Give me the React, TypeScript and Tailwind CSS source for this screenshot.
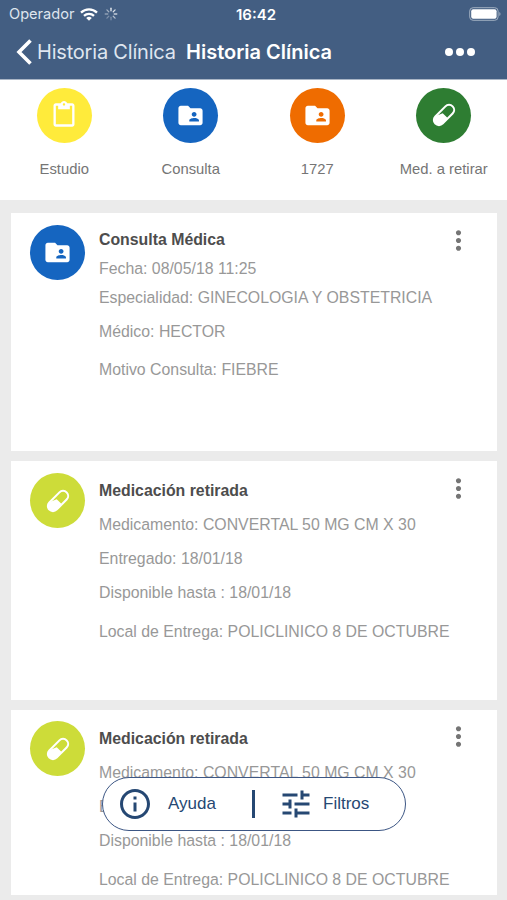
import React from 'react';
import { MdContentPaste, MdFolderShared, MdInfoOutline, MdMoreVert, MdTune } from 'react-icons/md';
import clsx from 'clsx';

type IconKind = 'study' | 'folder' | 'pill';

interface Row {
  text: string;
  gap: string;
}

interface Entry {
  title: string;
  icon: IconKind;
  color: string;
  card: string;
  badgeTop: string;
  top: string;
  rows: Row[];
}

const categories: { label: string; icon: IconKind; color: string }[] = [
  { label: 'Estudio', icon: 'study', color: 'bg-[#ffeb3b]' },
  { label: 'Consulta', icon: 'folder', color: 'bg-[#1565c0]' },
  { label: '1727', icon: 'folder', color: 'bg-[#ef6c00]' },
  { label: 'Med. a retirar', icon: 'pill', color: 'bg-[#2e7d32]' },
];

const medicationRows: Row[] = [
  { text: 'Medicamento: CONVERTAL 50 MG CM X 30', gap: 'mt-3.5' },
  { text: 'Entregado: 18/01/18', gap: 'mt-3.5' },
  { text: 'Disponible hasta : 18/01/18', gap: 'mt-3.5' },
  { text: 'Local de Entrega: POLICLINICO 8 DE OCTUBRE', gap: 'mt-[19px]' },
];

const entries: Entry[] = [
  {
    title: 'Consulta Médica',
    icon: 'folder',
    color: 'bg-[#1565c0]',
    card: 'h-[238px]',
    badgeTop: 'pt-3',
    top: 'pt-[17px]',
    rows: [
      { text: 'Fecha: 08/05/18 11:25', gap: 'mt-[9px]' },
      { text: 'Especialidad: GINECOLOGIA Y OBSTETRICIA', gap: 'mt-[9px]' },
      { text: 'Médico: HECTOR', gap: 'mt-3.5' },
      { text: 'Motivo Consulta: FIEBRE', gap: 'mt-[18px]' },
    ],
  },
  {
    title: 'Medicación retirada',
    icon: 'pill',
    color: 'bg-[#cddc39]',
    card: 'h-[239px]',
    badgeTop: 'pt-3',
    top: 'pt-5',
    rows: medicationRows,
  },
  {
    title: 'Medicación retirada',
    icon: 'pill',
    color: 'bg-[#cddc39]',
    card: 'h-[185px]',
    badgeTop: 'pt-[11px]',
    top: 'pt-[19px]',
    rows: medicationRows,
  },
];

function PillIcon() {
  return (
    <svg viewBox="-14 -14 28 28" className="size-7" fill="none">
      <g transform="rotate(45)">
        <rect x="-5.1" y="-12.2" width="10.2" height="24.4" rx="5.1" stroke="#fff" strokeWidth="2.1" />
        <path d="M-5.1 6.4-2.2-.4h7.3v7.5a5.1 5.1 0 0 1-10.2 0z" fill="#fff" />
      </g>
    </svg>
  );
}

function Badge({ icon, color }: { icon: IconKind; color: string }) {
  return (
    <div className={clsx('flex size-[55px] shrink-0 items-center justify-center rounded-full text-white', color)}>
      {icon === 'study' && <MdContentPaste className="size-7" />}
      {icon === 'folder' && <MdFolderShared className="size-[29px]" />}
      {icon === 'pill' && <PillIcon />}
    </div>
  );
}

function StatusBar() {
  return (
    <div className="grid h-7 grid-cols-3 items-center pr-1.5 pl-[9px] text-[15px] leading-none">
      <div className="flex items-center">
        <span className="text-[14.6px] text-[#dfe5ee]">Operador</span>
        {/* Wifi */}
        <svg viewBox="0 0 18 13" className="ml-1.5 h-[13px] w-[18px]" fill="none" stroke="#fff" strokeWidth="2.3">
          <path d="M1 4.6a11.4 11.4 0 0 1 16 0" />
          <path d="M4 7.9a7.2 7.2 0 0 1 10 0" />
          <path d="M9 12.8 6.2 10a4 4 0 0 1 5.6 0z" fill="#fff" stroke="none" />
        </svg>
        {/* Activity spinner */}
        <svg viewBox="0 0 14 14" className="ml-1.5 size-3.5" stroke="#fff" strokeWidth="1.3" strokeLinecap="round">
          {[0.9, 0.8, 0.7, 0.6, 0.3, 0.3, 0.4, 0.5].map((opacity, i) => (
            <path key={i} d="M7 1.2v2.6" opacity={opacity} transform={`rotate(${i * 45} 7 7)`} />
          ))}
        </svg>
      </div>
      <span className="pl-0.5 text-center font-semibold text-white">16:42</span>
      <svg viewBox="0 0 32 14" className="h-3.5 w-8 justify-self-end" fill="none">
        <rect x="0.7" y="0.7" width="28.4" height="12.6" rx="3.4" stroke="#a1afc1" strokeWidth="1" />
        <rect x="2.2" y="2.2" width="25.4" height="9.6" rx="2" fill="#fff" />
        <path d="M30.3 5v4c1.6-.6 1.6-3.4 0-4z" fill="#a1afc1" />
      </svg>
    </div>
  );
}

function Header() {
  return (
    <header className="h-20 shrink-0 border-b border-[#aab6c6] bg-[#435e82] font-['Inter']">
      <StatusBar />
      <div className="flex h-12 items-center pl-4 text-[20px] leading-none whitespace-nowrap text-white">
        <svg viewBox="0 0 16 26" className="h-[26px] w-4" fill="none" stroke="#fff" strokeWidth="3.6">
          <path d="M14.5 1.5 3 13l11.5 11.5" />
        </svg>
        <span className="ml-[5px] w-[149px] tracking-[-0.2px] text-[#dfe6f0]">Historia Clínica</span>
        <h1 className="font-semibold">Historia Clínica</h1>
        <div className="mr-8 ml-auto flex gap-[3px]">
          <span className="size-2 rounded-full bg-white" />
          <span className="size-2 rounded-full bg-white" />
          <span className="size-2 rounded-full bg-white" />
        </div>
      </div>
    </header>
  );
}

function EntryCard({ entry }: { entry: Entry }) {
  return (
    <article className={clsx('flex overflow-hidden bg-white pr-[23px] pl-[19px]', entry.card)}>
      <div className={entry.badgeTop}>
        <Badge icon={entry.icon} color={entry.color} />
      </div>
      <div className={clsx('ml-3.5 min-w-0 flex-1 text-[15.85px] leading-5 whitespace-nowrap text-[#989898]', entry.top)}>
        <h2 className="font-bold text-[#4d4d4d]">{entry.title}</h2>
        {entry.rows.map((row) => (
          <p key={row.text} className={row.gap}>{row.text}</p>
        ))}
      </div>
      <button className={clsx('h-fit shrink-0 text-[#757575]', entry.badgeTop)}>
        <MdMoreVert className="size-[31px]" />
      </button>
    </article>
  );
}

export default function App() {
  return (
    <div className="relative flex h-[900px] w-[507px] flex-col overflow-hidden bg-[#ebebeb] font-['Liberation_Sans',sans-serif]">
      <Header />

      <nav className="grid h-[120px] shrink-0 grid-cols-4 bg-white pt-[7.5px] pl-px">
        {categories.map((item) => (
          <div key={item.label} className="flex flex-col items-center">
            <Badge icon={item.icon} color={item.color} />
            <span className="mt-[16.5px] text-[14.8px] leading-5 text-[#757575]">{item.label}</span>
          </div>
        ))}
      </nav>

      <main className="flex flex-col gap-2.5 pt-[13px] pr-2.5 pl-[11px]">
        {entries.map((entry, i) => (
          <EntryCard key={i} entry={entry} />
        ))}
      </main>

      {/* Floating actions */}
      <div className="absolute top-[777px] left-[102px] flex h-[54px] w-[304px] items-center rounded-full border-[1.5px] border-[#3c5684] bg-white text-[17px] text-[#264873]">
        <MdInfoOutline className="ml-3.5 size-9" />
        <span className="ml-[15px] w-[84px]">Ayuda</span>
        <span className="h-7 w-[3px] bg-[#264873]" />
        <MdTune className="ml-[23px] size-9" />
        <span className="ml-[9px]">Filtros</span>
      </div>
    </div>
  );
}
